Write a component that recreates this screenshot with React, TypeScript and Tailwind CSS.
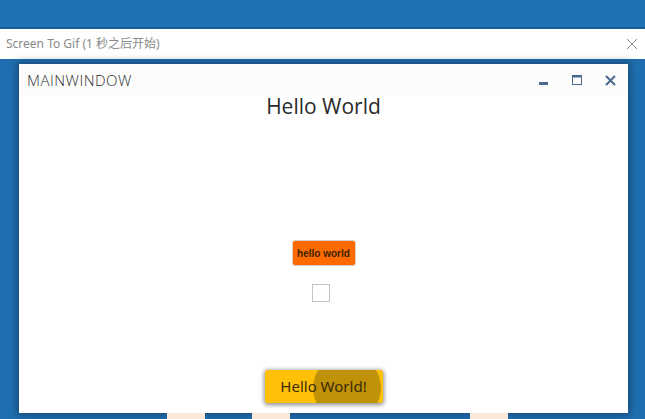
import React from 'react';

export default function App() {
  return (
    <div className="w-[645px] h-[419px] overflow-hidden bg-[#1f6fb0] flex flex-col font-['Open_Sans',sans-serif]">
      {/* desktop strip */}
      <div className="h-[29px] bg-[#2071b1] border-b-2 border-[#1c5f96]" />

      {/* recorder bar */}
      <div className="h-[30px] bg-white flex items-center justify-between pl-[6px] pr-[7px]">
        <span className="text-[12px] text-[#8a8a8a] font-['Noto_Sans','Noto_Sans_CJK_SC',sans-serif]">
          Screen To Gif (1 秒之后开始)
        </span>
        <svg width="12" height="12" viewBox="0 0 12 12" className="text-[#8c8c8c]">
          <path d="M1 1L11 11M11 1L1 11" stroke="currentColor" strokeWidth="1" fill="none" />
        </svg>
      </div>

      {/* captured area */}
      <div className="flex-1 flex flex-col pt-[5px] pl-[19px]">
        <div className="w-[609px] h-[349px] bg-white flex flex-col shadow-[0_0_7px_2px_rgba(20,40,70,0.55)]">
          {/* title bar */}
          <div className="h-[32px] bg-[#fcfcfc] flex items-center pl-[8px]">
            <span className="text-[15px] text-[#2e2e2e] font-light tracking-[0.5px]">MAINWINDOW</span>
            <div className="ml-auto flex items-center h-full text-[#4a6a8d]">
              <div className="w-[32px] h-full flex items-center justify-center pr-[6px]">
                <div className="w-[9px] h-[3px] bg-[#4a6a8d] mt-[6px]" />
              </div>
              <div className="w-[32px] h-full flex items-center justify-center pr-[2px]">
                <svg width="10" height="10" viewBox="0 0 10 10">
                  <rect x="0.5" y="0.5" width="9" height="9" fill="none" stroke="#4a6a8d" strokeWidth="1" />
                  <rect x="0" y="0" width="10" height="2.5" fill="#4a6a8d" />
                </svg>
              </div>
              <div className="w-[34px] h-full flex items-center justify-center pr-[2px]">
                <svg width="11" height="11" viewBox="0 0 11 11">
                  <path d="M1 1L10 10M10 1L1 10" stroke="#4a6a8d" strokeWidth="2" fill="none" />
                </svg>
              </div>
            </div>
          </div>

          {/* content */}
          <div className="flex-1 flex flex-col items-center">
            <h1 className="text-[21px] leading-[22px] text-[#2b2b2b] mt-[-1px]">Hello World</h1>
            <button className="mt-[123px] w-[64px] h-[26px] rounded-[3px] bg-[#ff6a00] border border-[#d8d0c8] text-[10px] font-bold text-[#3a2400] font-['Liberation_Sans',sans-serif]">
              hello world
            </button>
            <div className="mt-[18px] mr-[6px] w-[18px] h-[18px] border border-[#c4c4c4] bg-white" />
            <button className="relative overflow-hidden mt-[68px] w-[118px] h-[33px] rounded-[3px] bg-[#ffc107] shadow-[0_1px_4px_1px_rgba(0,0,0,0.45)] text-[15px] text-[#3b2a05] font-['Noto_Sans',sans-serif]">
              <span className="absolute left-[48px] top-[-16px] w-[68px] h-[68px] rounded-full bg-[#bf9208]" />
              <span className="relative">Hello World!</span>
            </button>
          </div>
        </div>

        {/* strip of taskbar under the window */}
        <div className="h-[6px] flex">
          <div className="ml-[148px] w-[38px] bg-[#fbe8d8]" />
          <div className="ml-[47px] w-[38px] bg-[#fbe8d8]" />
          <div className="ml-[180px] w-[38px] bg-[#fbe8d8]" />
        </div>
      </div>
    </div>
  );
}
